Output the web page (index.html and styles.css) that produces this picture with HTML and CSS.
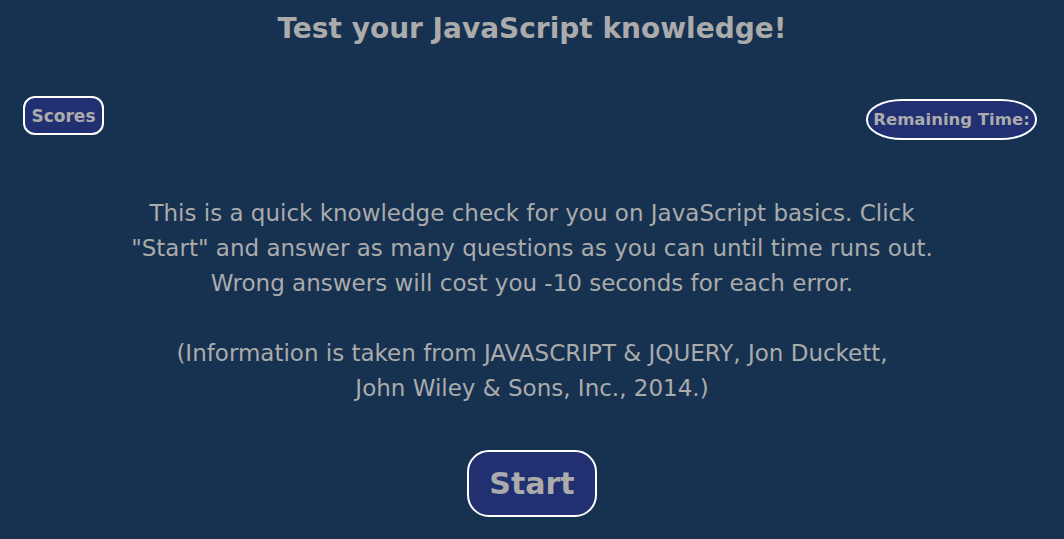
FILE: index.html
```html
<!DOCTYPE html>
<html>
<head>
<meta charset="utf-8">
<link rel="stylesheet" href="styles.css">
</head>
<body>
<h1 class="title">Test your JavaScript knowledge!</h1>
<div class="bar">
  <button class="pill scores">Scores</button>
  <div class="pill timer">Remaining Time:</div>
</div>
<main class="intro">
  <p>This is a quick knowledge check for you on JavaScript basics. Click<br>"Start" and answer as many questions as you can until time runs out.<br>Wrong answers will cost you -10 seconds for each error.</p>
  <p>(Information is taken from JAVASCRIPT &amp; JQUERY, Jon Duckett,<br>John Wiley &amp; Sons, Inc., 2014.)</p>
  <button class="start">Start</button>
</main>
</body>
</html>
```
FILE: styles.css
```css
html, body {
  margin: 0;
  padding: 0;
}
body {
  background: #173251;
  color: #ababab;
  font-family: "Comic Sans MS", "DejaVu Sans", sans-serif;
  width: 1064px;
  height: 539px;
  overflow: hidden;
}
.title {
  margin: 0;
  padding-top: 11px;
  text-align: center;
  font-size: 28px;
  line-height: 36px;
  font-weight: bold;
}
.bar {
  display: flex;
  justify-content: space-between;
  align-items: flex-start;
  padding: 49px 27px 0 23px;
}
.pill {
  background: #213071;
  color: #ababab;
  border: 2px solid #ffffff;
  font-family: inherit;
  font-weight: bold;
  font-size: 17px;
  box-sizing: border-box;
  display: flex;
  align-items: center;
  justify-content: center;
  padding: 0;
}
.scores {
  width: 81px;
  height: 39px;
  border-radius: 12px;
}
.timer {
  margin-top: 3px;
  width: 171px;
  height: 41px;
  border-radius: 36px / 20px;
  font-size: 16.5px;
}
.intro {
  text-align: center;
  font-size: 23px;
  line-height: 35px;
  margin-top: 56px;
}
.intro p {
  margin: 0 0 35px;
}
.start {
  margin-top: 9px;
  width: 130px;
  height: 67px;
  border-radius: 22px;
  background: #213071;
  color: #ababab;
  border: 2px solid #ffffff;
  font-family: inherit;
  font-weight: bold;
  font-size: 30px;
}
```
